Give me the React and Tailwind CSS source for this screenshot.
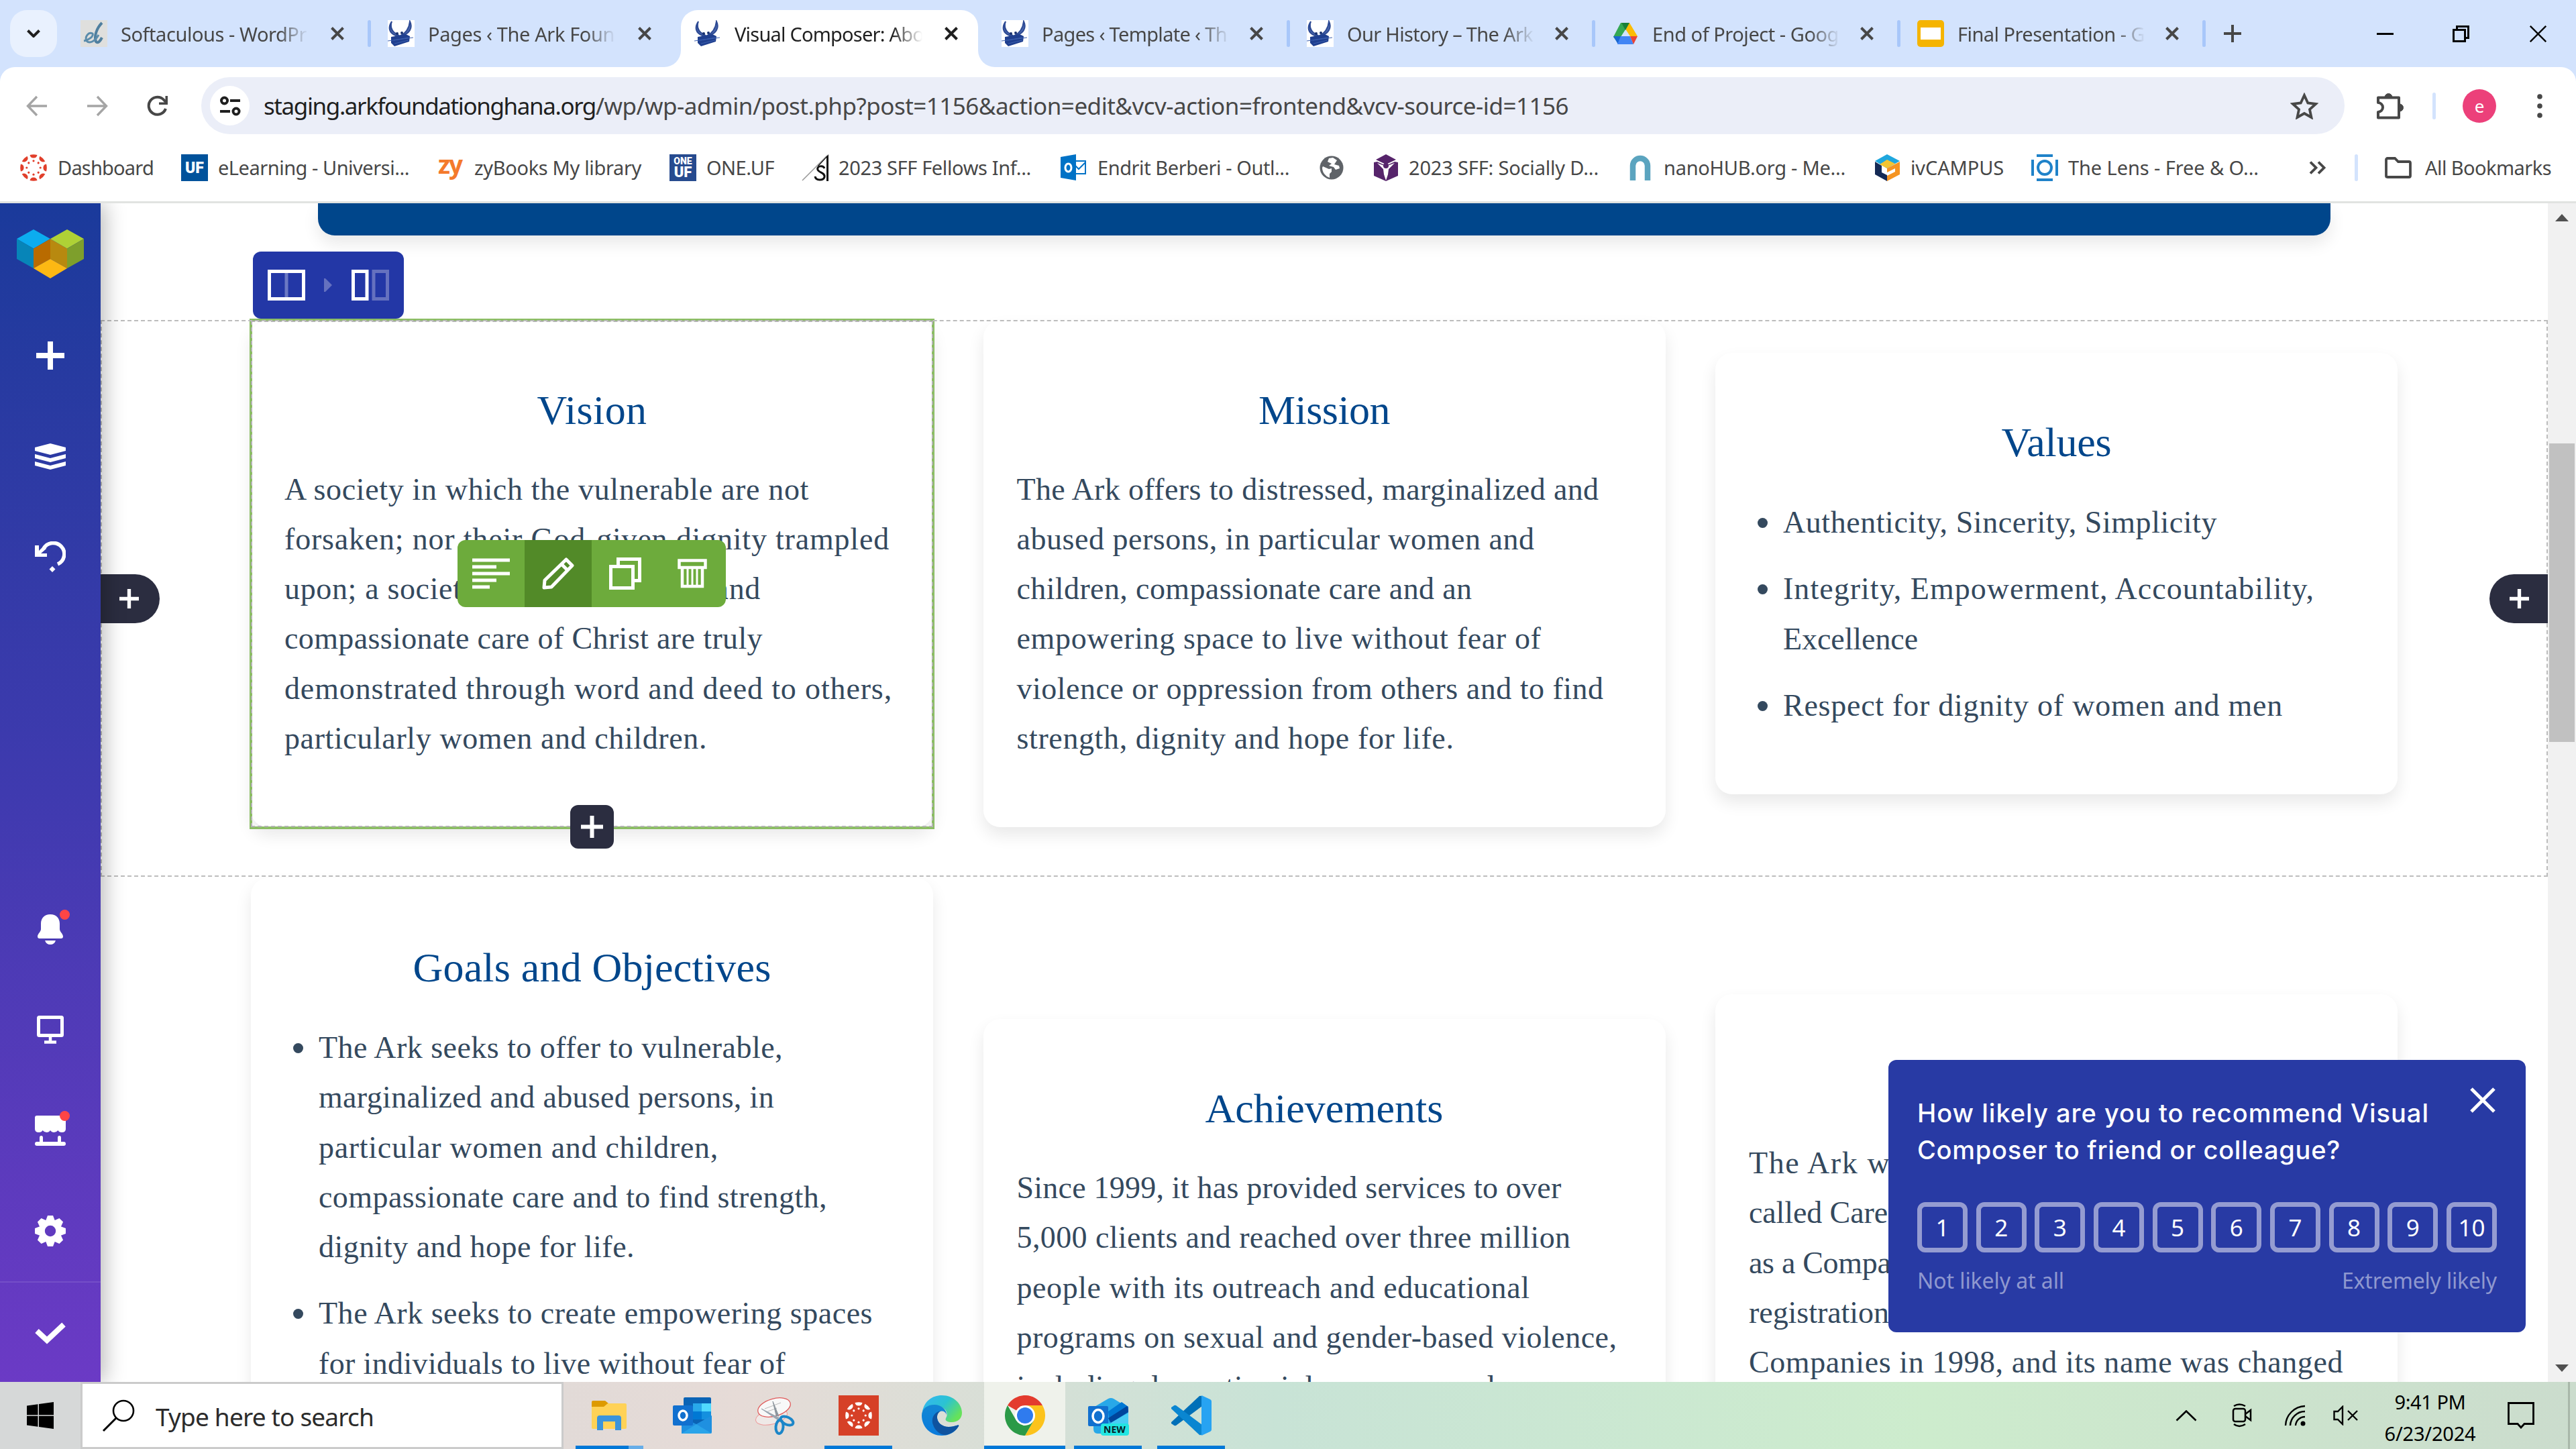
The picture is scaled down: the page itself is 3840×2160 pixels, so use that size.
import React, { useLayoutEffect, useRef, useState } from "react";

/* One line of text tracked so that it fills the given width. */
function Fit({ w, className = "", children }) {
  const ref = useRef(null);
  const [ls, setLs] = useState(0);
  useLayoutEffect(() => {
    const n = String(ref.current.textContent).length;
    const natural = ref.current.getBoundingClientRect().width;
    setLs((w - natural) / n);
  }, [w]);
  return (
    <span ref={ref} className={"inline-block whitespace-pre " + className} style={{ letterSpacing: ls + "px" }}>
      {children}
    </span>
  );
}

/* ---------- favicons ---------- */
const Ark = () => (
  <svg viewBox="0 0 40 40" className="size-10 bg-white">
    <path d="M6 2C-1 12 4 20 14 23L19 25C9 19 4 12 6 2Z" fill="#2d4a94" />
    <path d="M6 2C3 10 5 17 14 21L18 24L12 23C2 19 0 11 6 2Z" fill="#4c68ad" stroke="#2d4a94" strokeWidth="2" />
    <path d="M33 2C38 12 31 20 24 22L18 24C28 19 32 12 33 2Z" fill="#4c68ad" stroke="#2d4a94" strokeWidth="2" />
    <path d="M5 25L27 21L33 24L32 32L10 39L5 34Z" fill="#1f3f8f" />
    <path d="M0 31L38 26M9 30L31 26M10 35L31 30" stroke="#3c5fae" strokeWidth="1" />
    <circle cx="14" cy="20" r="2" fill="#16306f" />
    <circle cx="21" cy="19" r="2" fill="#16306f" />
  </svg>
);
const Soft = () => (
  <svg viewBox="0 0 40 40" className="size-10 bg-[#dfdfdd]">
    <path d="M32 4C24 12 20 24 23 32C26 36 30 30 32 26" fill="none" stroke="#4f7f9f" strokeWidth="4" />
    <path d="M5 31C12 30 20 24 18 20C12 17 6 25 9 31C14 36 22 31 27 22" fill="none" stroke="#5b8cab" strokeWidth="3" />
  </svg>
);
const Drive = () => (
  <svg viewBox="0 0 40 40" className="size-10">
    <path d="M13 4H26L20 14L8 33L2 25Z" fill="#34a853" />
    <path d="M14 4H26L38 24H27Z" fill="#fbbc04" />
    <path d="M14 4H26L20 15Z" fill="#188038" />
    <path d="M2 24H14L9 36Z" fill="#1967d2" />
    <path d="M13 24H27L32 36H8Z" fill="#4285f4" />
    <path d="M27 24H38L32 36Z" fill="#ea4335" />
  </svg>
);
const Slides = () => (
  <svg viewBox="0 0 40 40" className="size-10">
    <rect width="40" height="40" rx="5" fill="#f5b400" />
    <rect x="5" y="11" width="30" height="18" fill="#fff" />
  </svg>
);

const TABS = [
  { icon: Soft, text: "Softaculous - WordPr", w: 277, tab: 458, sep: true },
  { icon: Ark, text: "Pages ‹ The Ark Foun", w: 278, tab: 457 },
  { icon: Ark, text: "Visual Composer: Abo", w: 282, tab: 458, active: true },
  { icon: Ark, text: "Pages ‹ Template ‹ Th", w: 276, tab: 455, tight: true, sep: true },
  { icon: Ark, text: "Our History – The Ark", w: 277, tab: 455, tight: true, sep: true },
  { icon: Drive, text: "End of Project - Goog", w: 278, tab: 455, tight: true, sep: true },
  { icon: Slides, text: "Final Presentation - G", w: 279, tab: 456, tight: true, sep: true },
];

function TabStrip() {
  return (
    <div className="flex h-[100px] items-center bg-[#d3e3fd]">
      <div className="ml-[15px] mr-[15px] grid h-[70px] w-[70px] place-items-center rounded-[25px] bg-[#e9f1fe]">
        <svg viewBox="0 0 20 12" className="h-3 w-5">
          <path d="M1.5 1.5L10 10L18.5 1.5" fill="none" stroke="#1f1f1f" strokeWidth="4" />
        </svg>
      </div>
      {TABS.map((t, i) => (
        <div key={i} className="relative flex h-[100px] shrink-0 items-center pl-5" style={{ width: t.tab }}>
          {t.active && (
            <>
              <div className="absolute bottom-0 left-0 h-[85px] w-[443px] rounded-t-[25px] bg-white" />
              <svg viewBox="0 0 25 25" className="absolute -left-[25px] bottom-0 size-[25px]">
                <path d="M25 0V25H0A25 25 0 0 0 25 0Z" fill="#fff" />
              </svg>
              <svg viewBox="0 0 25 25" className="absolute bottom-0 left-[443px] size-[25px]">
                <path d="M0 0V25H25A25 25 0 0 1 0 0Z" fill="#fff" />
              </svg>
            </>
          )}
          <div className="relative flex items-center">
            <t.icon />
            <div
              className={
                "ml-[20px] h-[46px] w-[280px] overflow-hidden pt-0.5 text-[29px] leading-[44px] [mask-image:linear-gradient(to_right,#000_84%,transparent)] " +
                (t.active ? "text-[#1f1f1f]" : "text-[#474747]")
              }
            >
              <Fit w={t.w}>{t.text}</Fit>
            </div>
            <svg viewBox="0 0 20 20" className={"size-5 " + (t.tight ? "ml-[30px]" : "ml-[33px]")}>
              <path d="M1.5 1.5L18.5 18.5M18.5 1.5L1.5 18.5" stroke={t.active ? "#1f1f1f" : "#474747"} strokeWidth="4" />
            </svg>
            {t.sep && <div className="ml-[35px] h-10 w-[5px] rounded-full bg-[#a8c7fa]" />}
          </div>
        </div>
      ))}
      <svg viewBox="0 0 26 26" className="ml-[21px] size-[26px]">
        <path d="M13 0V26M0 13H26" stroke="#474747" strokeWidth="4" />
      </svg>
      <div className="ml-auto flex items-center gap-[100px] pr-11">
        <svg viewBox="0 0 25 25" className="-mr-[12px] h-[25px] w-[25px]">
          <path d="M0 12.5H25" stroke="#000" strokeWidth="3" />
        </svg>
        <svg viewBox="0 0 25 25" className="-mr-[10px] h-[25px] w-[25px]">
          <path d="M1.5 6.5H18.5V23.5H1.5ZM6.5 6V1.5H23.5V18.5H19" fill="none" stroke="#000" strokeWidth="3" />
        </svg>
        <svg viewBox="0 0 25 25" className="h-[25px] w-[25px]">
          <path d="M.8.8L24.2 24.2M24.2.8L.8 24.2" stroke="#000" strokeWidth="2.4" />
        </svg>
      </div>
    </div>
  );
}

function AddressBar() {
  return (
    <div className="flex h-[115px] items-center rounded-t-[22px] bg-white pl-[39px]">
      <svg viewBox="0 0 32 32" className="size-8">
        <path d="M31 16H3M16 2L2.5 16L16 30" fill="none" stroke="#a5a5a5" strokeWidth="3.4" />
      </svg>
      <svg viewBox="0 0 32 32" className="ml-[58px] size-8">
        <path d="M1 16H29M16 2L29.5 16L16 30" fill="none" stroke="#a5a5a5" strokeWidth="3.4" />
      </svg>
      <svg viewBox="0 0 32 32" className="ml-[58px] size-8">
        <path d="M28 20A13 13 0 1 1 25.5 7.2L29 11" fill="none" stroke="#474747" strokeWidth="4" />
        <path d="M31 1V14H18V10.5H27.5V1Z" fill="#474747" />
      </svg>
      <div className="ml-[49px] flex h-[85px] w-[3195px] items-center rounded-full bg-[#ebeef8] pl-[13px]">
        <div className="grid size-[59px] place-items-center rounded-full bg-white">
          <svg viewBox="0 0 32 30" className="h-[30px] w-8">
            <g fill="none" stroke="#1f1f1f" strokeWidth="4">
              <circle cx="7.500" cy="7" r="4.500" />
              <path d="M16 7H31M1 23H16" />
              <circle cx="25" cy="23" r="4.500" />
            </g>
          </svg>
        </div>
        <div className="ml-[21px] flex text-[35px] leading-[50px]">
          <Fit w={495} className="text-[#1f1f1f]">staging.arkfoundationghana.org</Fit>
          <Fit w={1450} className="text-[#474747]">/wp/wp-admin/post.php?post=1156&amp;action=edit&amp;vcv-action=frontend&amp;vcv-source-id=1156</Fit>
        </div>
        <svg viewBox="0 0 42 40" className="ml-auto mr-[39px] h-10 w-[42px]">
          <path d="M21 4L26.300 15.500L38 17L29 25.200L31.500 37L21 31L10.500 37L13 25.200L4 17L15.700 15.500Z" fill="none" stroke="#474747" strokeWidth="3.800" />
        </svg>
      </div>
      <svg viewBox="0 0 42 42" className="ml-[47px] size-[42px]">
        <path d="M3 8.500H34V38.500H3V30A7 7 0 0 0 3 16Z" fill="none" stroke="#474747" strokeWidth="4" strokeLinejoin="round" />
        <path d="M13 8A5.500 5.500 0 0 1 24 8ZM35 18A5.500 5.500 0 0 1 35 29Z" fill="#474747" stroke="#474747" />
      </svg>
      <div className="ml-[42px] h-10 w-[5px] rounded-full bg-[#d3e3fd]" />
      <div className="ml-10 grid size-[50px] place-items-center rounded-full bg-[#ec407a] text-[26px] leading-none text-white">e</div>
      <svg viewBox="0 0 8 36" className="ml-[61px] h-9 w-2">
        <g fill="#474747">
          <circle cx="4" cy="4" r="3.800" />
          <circle cx="4" cy="18" r="3.800" />
          <circle cx="4" cy="32" r="3.800" />
        </g>
      </svg>
    </div>
  );
}

/* ---------- bookmarks ---------- */
const RingMark = ({ color, className }) => (
  <svg viewBox="0 0 40 40" className={className}>
    {[0, 45, 90, 135, 180, 225, 270, 315].map((a) => (
      <g key={a} transform={"rotate(" + a + " 20 20)"} fill={color}>
        <path d="M14.500 1A20 20 0 0 1 25.500 1A5.600 5.600 0 0 1 14.500 1Z" />
        <circle cx="20" cy="9.800" r="1.600" />
      </g>
    ))}
  </svg>
);
const BM = [
  { x: 30, iw: 40, gap: 16, w: 143, text: "Dashboard", icon: <RingMark color="#e13f2b" className="size-10" /> },
  {
    x: 270, iw: 40, gap: 15, w: 285, text: "eLearning - Universi...",
    icon: <div className="grid size-10 place-items-center bg-[#00529b] font-['Roboto'] text-[23px] font-black leading-none text-white">UF</div>,
  },
  {
    x: 653, iw: 40, gap: 14, w: 249, text: "zyBooks My library",
    icon: <div className="size-10 font-['Open_Sans'] text-[37px] font-bold leading-[29px] tracking-[-2px] text-[#f47a2c]">zy</div>,
  },
  {
    x: 998, iw: 40, gap: 15, w: 101, text: "ONE.UF",
    icon: (
      <div className="flex size-10 flex-col items-center justify-center bg-[#274b8f] font-['Roboto'] font-black text-white">
        <span className="text-[14px] leading-[13px]">ONE</span>
        <span className="text-[22px] leading-[20px]">UF</span>
      </div>
    ),
  },
  {
    x: 1195, iw: 41, gap: 14, w: 287, text: "2023 SFF Fellows Inf...",
    icon: (
      <svg viewBox="0 0 41 40" className="h-10 w-[41px]">
        <path d="M1 39L38 2" stroke="#999" strokeWidth="1.500" />
        <path d="M24 17L40 0V40H37V5L25 18Z" fill="#111" />
        <path d="M34 21C32 16 22 17 24 23C26 28 35 27 34 34C32 40 21 39 20 33" fill="none" stroke="#111" strokeWidth="3" />
      </svg>
    ),
  },
  {
    x: 1581, iw: 39, gap: 16, w: 286, text: "Endrit Berberi - Outl...",
    icon: (
      <svg viewBox="0 0 39 40" className="h-10 w-[39px]">
        <path d="M22 10H37V29H22" fill="#fff" stroke="#0072c6" strokeWidth="2" />
        <path d="M22 17L27 22L37 12" fill="none" stroke="#0072c6" strokeWidth="2" />
        <path d="M0 4L23 0V39L0 35Z" fill="#0072c6" />
        <ellipse cx="11.500" cy="20" rx="4.500" ry="6" fill="none" stroke="#fff" strokeWidth="3" />
      </svg>
    ),
  },
  {
    x: 1967, iw: 36, gap: 0, w: 0, text: "",
    icon: (
      <svg viewBox="0 0 36 36" className="size-9">
        <circle cx="18" cy="18" r="17.500" fill="#5f6368" />
        <path d="M5 16L14 20L18 19V24L15 27V33A16 16 0 0 1 4 18ZM14 4L12 9L18 12L14 15L21 17L24 21L30 19L29 15L22 13L26 7L20 3Z" fill="#fff" />
      </svg>
    ),
  },
  {
    x: 2048, iw: 36, gap: 16, w: 283, text: "2023 SFF: Socially D...",
    icon: (
      <svg viewBox="0 0 36 40" className="h-10 w-9">
        <path d="M18 0L33 8L18 15L3 8Z" fill="#56246b" />
        <path d="M0 12L5 11L18 17L31 11L36 12V32L18 40L0 32Z" fill="#56246b" />
        <path d="M5 13L14 22L15 30L18 39L21 30L22 22L31 13L18 18Z" fill="#fff" />
        <circle cx="18" cy="17" r="4" fill="#56246b" />
      </svg>
    ),
  },
  {
    x: 2429, iw: 32, gap: 19, w: 271, text: "nanoHUB.org - Me...",
    icon: (
      <svg viewBox="0 0 32 38" className="h-[38px] w-8">
        <path d="M5 38V16A11 11 0 0 1 27 16V38" fill="none" stroke="#5ba4bf" strokeWidth="8.500" />
      </svg>
    ),
  },
  {
    x: 2795, iw: 37, gap: 16, w: 139, text: "ivCAMPUS",
    icon: (
      <svg viewBox="0 0 37 40" className="h-10 w-[37px]">
        <path d="M18 0L37 10L18 21L0 10Z" fill="#1fa7de" />
        <path d="M18 8L30 14L18 21L7 15Z" fill="#f3c531" />
        <path d="M0 11L10 17V27L18 31V40L0 30Z" fill="#152a55" />
        <path d="M18 21L37 11V30L18 40V32L30 26V21L18 27Z" fill="#f59422" />
      </svg>
    ),
  },
  {
    x: 3028, iw: 40, gap: 15, w: 284, text: "The Lens - Free & O...",
    icon: (
      <svg viewBox="0 0 40 40" className="size-10">
        <g fill="none" stroke="#1f82c9" strokeWidth="4">
          <circle cx="20" cy="20" r="10" />
          <path d="M8 2H32M8 38H32M2 8V32M38 8V32" />
        </g>
      </svg>
    ),
  },
];

function Bookmarks() {
  return (
    <div className="flex h-[88px] items-center border-b-[3px] border-[#e1e3e1] bg-white pb-[15px] text-[29px] leading-10 text-[#474747]">
      {BM.map((b, i) => {
        const next = BM[i + 1] ? BM[i + 1].x : 3442;
        return (
          <div key={i} className="flex shrink-0 items-center" style={{ width: next - b.x + (i === 0 ? b.x : 0), paddingLeft: i === 0 ? b.x : 0 }}>
            <div className="shrink-0" style={{ width: b.iw }}>{b.icon}</div>
            {b.text && (
              <div style={{ marginLeft: b.gap }}>
                <Fit w={b.w}>{b.text}</Fit>
              </div>
            )}
          </div>
        );
      })}
      <svg viewBox="0 0 26 20" className="h-5 w-[26px]">
        <path d="M2 1.500L10.500 10L2 18.500M14 1.500L22.500 10L14 18.500" fill="none" stroke="#474747" strokeWidth="3.800" />
      </svg>
      <div className="ml-[42px] h-10 w-[5px] rounded-full bg-[#d3e3fd]" />
      <svg viewBox="0 0 40 32" className="ml-10 h-8 w-10">
        <path d="M2 4A2 2 0 0 1 4 2H15L20 7H36A2 2 0 0 1 38 9V28A2 2 0 0 1 36 30H4A2 2 0 0 1 2 28Z" fill="none" stroke="#474747" strokeWidth="3.800" />
      </svg>
      <div className="ml-5">
        <Fit w={188}>All Bookmarks</Fit>
      </div>
    </div>
  );
}

/* ---------- editor sidebar ---------- */
const Slot = ({ children, dot }) => (
  <div className="grid h-[150px] w-[150px] place-items-center">
    <div className="relative grid size-[46px] place-items-center">
      {children}
      {dot && <div className="absolute -right-[6px] -top-[6px] size-[15px] rounded-full bg-[#ff4545]" />}
    </div>
  </div>
);

function Sidebar() {
  return (
    <aside className="relative z-10 flex h-full w-[150px] shrink-0 flex-col bg-linear-to-b from-[#1a3a9b] via-[#3f3aaf] to-[#6b3ac5] shadow-[6px_0_30px_rgba(0,0,0,0.28)]">
      <div className="grid h-[152px] place-items-center pb-[2px]">
        <svg viewBox="25 342 100 73" className="h-[73px] w-[100px]">
          <path d="M50 342L75 356L50 370.500L25 356Z" fill="#0cacef" />
          <path d="M25 356L50 370.500V400L25 386Z" fill="#0785b8" />
          <path d="M50 370.500L75 356V386L50 400Z" fill="#b96b00" />
          <path d="M75 356L100 370.500V400L75 386Z" fill="#b8890f" />
          <path d="M50 400L75 386L100 400L75 415Z" fill="#fdb813" />
          <path d="M100 342L125 356L100 370.500L75 356Z" fill="#afd136" />
          <path d="M100 370.500L125 356V386L100 400Z" fill="#7e9f2c" />
        </svg>
      </div>
      <Slot>
        <svg viewBox="0 0 42 42" className="size-[42px]">
          <path d="M21 0V42M0 21H42" stroke="#fff" strokeWidth="8" />
        </svg>
      </Slot>
      <Slot>
        <svg viewBox="0 0 46 39" className="h-[39px] w-[46px]" fill="#fff">
          <path d="M0 6L23 0L46 6V11L23 17L0 11Z" />
          <path d="M0 16L23 22L46 16V22L23 28L0 22Z" />
          <path d="M0 27L23 33L46 27V33L23 39L0 33Z" />
        </svg>
      </Slot>
      <Slot>
        <svg viewBox="0 0 46 46" className="size-[46px]">
          <path d="M13 10.700A16.500 16.500 0 1 1 34 34" fill="none" stroke="#fff" strokeWidth="5.500" />
          <path d="M0 6H6V14L13 7L17 11L9 18H18V23H0Z" fill="#fff" />
          <path d="M26 37L30.500 41.500L26 46L21.500 41.500Z" fill="#fff" />
        </svg>
      </Slot>
      <div className="flex-1" />
      <Slot dot>
        <svg viewBox="0 0 40 45" className="h-[45px] w-10" fill="#fff">
          <path d="M20 0C29 0 34 6 34 14V22C34 26 39 29 39 33Q39 36 36 36H4Q1 36 1 33C1 29 6 26 6 22V14C6 6 11 0 20 0ZM12 39H28Q26 45 20 45Q14 45 12 39Z" />
        </svg>
      </Slot>
      <Slot>
        <svg viewBox="0 0 40 42" className="h-[42px] w-10">
          <rect x="2.500" y="2.500" width="35" height="27" rx="1" fill="none" stroke="#fff" strokeWidth="5" />
          <path d="M20 31V40M11 39.500H29" stroke="#fff" strokeWidth="4.500" />
        </svg>
      </Slot>
      <Slot dot>
        <svg viewBox="0 0 46 45" className="h-[45px] w-[46px]" fill="#fff">
          <path d="M3 0H43Q46 0 46 3V20Q46 25 40 25Q36 25 34.500 22Q32 25 28.500 25Q25 25 23 22Q21 25 17.500 25Q14 25 11.500 22Q10 25 6 25Q0 25 0 20V3Q0 0 3 0Z" />
          <path d="M7 39V33Q7 30 9.500 30Q12 30 12 33V39H34V33Q34 30 36.500 30Q39 30 39 33V39H43Q46 39 46 42Q46 45 43 45H3Q0 45 0 42Q0 39 3 39Z" />
        </svg>
      </Slot>
      <Slot>
        <svg viewBox="0 0 46 46" className="size-[46px]">
          {[0, 45, 90, 135].map((a) => (
            <path key={a} d="M19 0H27L30 8H16ZM19 46H27L30 38H16Z" fill="#fff" transform={"rotate(" + a + " 23 23)"} />
          ))}
          <circle cx="23" cy="23" r="12.700" fill="none" stroke="#fff" strokeWidth="9" />
        </svg>
      </Slot>
      <div className="grid h-[150px] place-items-center border-t-2 border-white/10 pt-[4px]">
        <svg viewBox="0 0 46 34" className="h-[34px] w-[46px]">
          <path d="M3 13L18 27L43 3.500" fill="none" stroke="#fff" strokeWidth="8" />
        </svg>
      </div>
    </aside>
  );
}

/* ---------- page canvas ---------- */
const Heading = ({ w, children }) => (
  <div className="h-[74px] text-center text-[62px] leading-[74px] text-[#00468b]">
    <Fit w={w}>{children}</Fit>
  </div>
);
const Lines = ({ items }) => (
  <div className="mt-[45px] text-[46px] leading-[74.250px] text-[#34495e]">
    {items.map(([t, w]) => (
      <div key={t} className="h-[74.250px]">
        <Fit w={w + 1}>{t}</Fit>
      </div>
    ))}
  </div>
);
const List = ({ items }) => (
  <div className="mt-[46px] flex flex-col gap-[25px] text-[46px] leading-[74.250px] text-[#34495e]">
    {items.map((li) => (
      <div key={li[0][0]} className="flex pl-[13px]">
        <div className="mt-[30px] size-[15px] shrink-0 rounded-full bg-[#34495e]" />
        <div className="ml-[23px]">
          {li.map(([t, w]) => (
            <div key={t} className="h-[74.250px]">
              <Fit w={w + 1}>{t}</Fit>
            </div>
          ))}
        </div>
      </div>
    ))}
  </div>
);
const Card = ({ className, children }) => (
  <div className={"relative w-[1017px] shrink-0 rounded-[25px] bg-white px-[50px] pt-[96px] shadow-[0_12px_25px_rgba(0,0,0,0.09)] " + className}>{children}</div>
);
const Plus = ({ className }) => (
  <svg viewBox="0 0 30 30" className={className}>
    <path d="M15 0V30M0 15H30" stroke="#fff" strokeWidth="5.500" />
  </svg>
);

function ElementControls() {
  return (
    <div className="absolute left-[308px] top-[327px] flex h-[100px] w-[400px] overflow-hidden rounded-[12px] bg-[#6dab3c]">
      <div className="grid flex-1 place-items-center">
        <svg viewBox="0 0 56 46" className="h-[46px] w-14">
          <path d="M0 3H56M0 13H36M0 23H56M0 33H36M0 43H26" stroke="#fff" strokeWidth="5" />
        </svg>
      </div>
      <div className="grid flex-1 place-items-center bg-[#528a28]">
        <svg viewBox="0 0 48 48" className="size-12">
          <g fill="none" stroke="#fff" strokeWidth="5" strokeLinejoin="round">
            <path d="M36 3L45 12L14 44L3 45L4 34Z" />
            <path d="M29 10L38 19" />
          </g>
        </svg>
      </div>
      <div className="grid flex-1 place-items-center">
        <svg viewBox="0 0 48 48" className="size-12">
          <path d="M2.500 13.500H35.500V45.500H2.500ZM13.500 12V2.500H45.500V34.500H37" fill="none" stroke="#fff" strokeWidth="5" />
        </svg>
      </div>
      <div className="grid flex-1 place-items-center">
        <svg viewBox="0 0 44 44" className="size-11">
          <g fill="none" stroke="#fff" strokeWidth="4.500">
            <path d="M2.500 2.500H41.500V13H2.500ZM7 14V41H37V14" />
            <path d="M15 14V41M22 14V41M29 14V41" strokeWidth="3" />
          </g>
        </svg>
      </div>
    </div>
  );
}

function Breadcrumb() {
  return (
    <div className="absolute left-[227px] top-[72px] flex h-[100px] w-[225px] items-center rounded-[12px] bg-[#2337a6] pl-[22px]">
      <svg viewBox="0 0 56 46" className="h-[46px] w-14">
        <path d="M28 4V42" stroke="#6b78c3" strokeWidth="5" />
        <path d="M2.500 2.500H53.500V43.500H2.500Z" fill="none" stroke="#fff" strokeWidth="5" />
      </svg>
      <svg viewBox="0 0 12 20" className="ml-7 h-5 w-3">
        <path d="M0 0H2L12 10L2 20H0Z" fill="#6571bf" />
      </svg>
      <svg viewBox="0 0 56 46" className="ml-[29px] h-[46px] w-14">
        <path d="M2.500 2.500H23V43.500H2.500Z" fill="none" stroke="#fff" strokeWidth="5" />
        <path d="M33 2.500H53.500V43.500H33Z" fill="none" stroke="#6571bf" strokeWidth="5" />
      </svg>
    </div>
  );
}

function Canvas() {
  return (
    <main className="relative h-full w-[3648px] shrink-0 overflow-hidden bg-white font-['Liberation_Serif',serif]">
      <div className="ml-[324px] h-12 w-[3000px] rounded-b-[25px] bg-[#00468b] shadow-[0_12px_25px_rgba(0,0,0,0.09)]" />
      <div className="relative mt-[126px] flex h-[830px] gap-[74.500px] pl-[224px] pb-[75px]">
        <div className="flex h-[755px] items-center gap-[74.500px] pt-px">
          <Card className="h-[755px]">
            <Heading w={164}>Vision</Heading>
            <Lines
              items={[
                ["A society in which the vulnerable are not", 781],
                ["forsaken; nor their God-given dignity trampled", 901],
                ["upon; a society in which the love and", 709],
                ["compassionate care of Christ are truly", 712],
                ["demonstrated through word and deed to others,", 905],
                ["particularly women and children.", 629],
              ]}
            />
            <div className="absolute -inset-x-[2px] -bottom-[3px] -top-[3px] border-4 border-[#8bbd63]" />
            <div className="absolute inset-0 border-2 border-dashed border-[#b3b3b3]" />
            <ElementControls />
            <div className="absolute -bottom-[32px] left-[476px] grid size-[65px] place-items-center rounded-[12px] bg-[#2b2d40]">
              <Plus className="size-[33px]" />
            </div>
          </Card>
          <Card className="h-[755px]">
            <Heading w={196}>Mission</Heading>
            <Lines
              items={[
                ["The Ark offers to distressed, marginalized and", 867],
                ["abused persons, in particular women and", 771],
                ["children, compassionate care and an", 678],
                ["empowering space to live without fear of", 781],
                ["violence or oppression from others and to find", 874],
                ["strength, dignity and hope for life.", 651],
              ]}
            />
          </Card>
          <Card className="h-[658px]">
            <Heading w={164}>Values</Heading>
            <List
              items={[
                [["Authenticity, Sincerity, Simplicity", 646]],
                [
                  ["Integrity, Empowerment, Accountability,", 791],
                  ["Excellence", 200],
                ],
                [["Respect for dignity of women and men", 744]],
              ]}
            />
          </Card>
        </div>
        <div className="absolute inset-0 border-2 border-dashed border-[#bdbdbd]" />
        <div className="absolute left-0 top-[379px] flex h-[73px] w-[88px] items-center rounded-r-full bg-[#2b2d40] pl-[28px]">
          <Plus className="size-[29px]" />
        </div>
        <div className="absolute right-0 top-[379px] flex h-[73px] w-[87px] items-center rounded-l-full bg-[#2b2d40] pl-[30px]">
          <Plus className="size-[29px]" />
        </div>
      </div>
      <div className="flex items-start gap-[74.500px] pl-[224px] pt-0.5">
        <Card className="h-[1000px]">
          <Heading w={534}>Goals and Objectives</Heading>
          <List
            items={[
              [
                ["The Ark seeks to offer to vulnerable,", 691],
                ["marginalized and abused persons, in", 678],
                ["particular women and children,", 595],
                ["compassionate care and to find strength,", 757],
                ["dignity and hope for life.", 470],
              ],
              [
                ["The Ark seeks to create empowering spaces", 825],
                ["for individuals to live without fear of", 695],
              ],
            ]}
          />
        </Card>
        <Card className="mt-[210px] h-[800px]">
          <Heading w={355}>Achievements</Heading>
          <Lines
            items={[
              ["Since 1999, it has provided services to over", 811],
              ["5,000 clients and reached over three million", 825],
              ["people with its outreach and educational", 764],
              ["programs on sexual and gender-based violence,", 894],
              ["including domestic violence, rape and", 712],
            ]}
          />
        </Card>
        <Card className="mt-[173px] h-[800px]">
          <div className="h-[74px]" />
          <Lines
            items={[
              ["The Ark was", 252],
              ["called Care", 206],
              ["as a Company", 256],
              ["registration", 208],
              ["Companies in 1998, and its name was changed", 885],
            ]}
          />
        </Card>
      </div>
      <Breadcrumb />
      <Survey />
    </main>
  );
}

function Survey() {
  return (
    <div className="absolute left-[2665px] top-[1277px] flex h-[406px] w-[950px] flex-col rounded-[12px] bg-[#283aa4] pl-[43px] pr-[43px] pt-[41px] font-['Inter',sans-serif] text-white">
      <div className="flex h-[114px] justify-between">
        <div className="pt-[11px] text-[38px] font-medium leading-[55px]">
          <div><Fit w={763}>How likely are you to recommend Visual</Fit></div>
          <div><Fit w={631}>Composer to friend or colleague?</Fit></div>
        </div>
        <svg viewBox="0 0 38 38" className="mr-[2px] size-[38px]">
          <path d="M2 2L36 36M36 2L2 36" stroke="#fff" strokeWidth="5" />
        </svg>
      </div>
      <div className="mt-[57px] flex justify-between">
        {[1, 2, 3, 4, 5, 6, 7, 8, 9, 10].map((n) => (
          <div key={n} className="grid h-[75px] w-[75px] place-items-center rounded-[12px] border-[7px] border-[#959cd1] font-['Noto_Sans',sans-serif] text-[35px] leading-none">
            {n}
          </div>
        ))}
      </div>
      <div className="mt-[19px] flex justify-between font-['Noto_Sans',sans-serif] text-[32px] leading-[46px] text-[#8f98cf]">
        <Fit w={219}>Not likely at all</Fit>
        <Fit w={231}>Extremely likely</Fit>
      </div>
    </div>
  );
}

function Scrollbar() {
  return (
    <div className="flex h-full w-[42px] flex-col items-center bg-[#f1f1f1]">
      <svg viewBox="0 0 20 11" className="mt-[16px] h-[11px] w-5"><path d="M10 0L20 11H0Z" fill="#505050" /></svg>
      <div className="mt-[331px] h-[445px] w-[38px] bg-[#c1c1c1]" />
      <svg viewBox="0 0 20 11" className="mb-[15px] mt-auto h-[11px] w-5"><path d="M10 11L20 0H0Z" fill="#505050" /></svg>
    </div>
  );
}

/* ---------- taskbar ---------- */
const Outlook = ({ className }) => (
  <svg viewBox="0 0 60 60" className={className}>
    <rect x="17" y="3" width="41" height="40" rx="2" fill="#0a63b5" />
    <path d="M31 12H44V24H31Z" fill="#28a8ea" />
    <path d="M44 12H58V24H44Z" fill="#50d9ff" />
    <path d="M31 24H44V36H31Z" fill="#0078d4" />
    <path d="M44 24H58V36H44Z" fill="#1490df" />
    <path d="M14 57V32L36 43L59 30V55Q59 57 57 57Z" fill="#1f90e0" />
    <path d="M14 57L36 43L59 57Z" fill="#35b8f1" opacity=".5" />
    <rect x="1" y="15" width="30" height="30" rx="2" fill="#1170cf" />
    <ellipse cx="16" cy="30" rx="6" ry="7" fill="none" stroke="#fff" strokeWidth="3.500" />
  </svg>
);

const APPS = [
  {
    bar: 81,
    icon: (
      <svg viewBox="0 0 60 60" className="size-[60px]">
        <path d="M4 10Q4 8 6 8H24L29 12V22H4Z" fill="#dd9a00" />
        <path d="M4 17H22L28 12H54Q56 12 56 14V48Q56 50 54 50H6Q4 50 4 48Z" fill="#ffd257" />
        <path d="M12 52V34Q12 30 16 30H44Q48 30 48 34V52H39V39H21V52Z" fill="#3b94dc" />
      </svg>
    ),
  },
  { icon: <Outlook className="size-[60px]" /> },
  {
    icon: (
      <svg viewBox="0 0 60 60" className="size-[60px]">
        <ellipse cx="24" cy="32" rx="24" ry="11" transform="rotate(-14 24 32)" fill="#efe9e7" stroke="#e99" />
        <ellipse cx="28" cy="18" rx="25" ry="13" transform="rotate(-16 28 18)" fill="#f8f8f8" stroke="#e05b5b" strokeWidth="1.300" />
        <path d="M14 20L38 11M16 25L32 19" stroke="#bbb" />
        <path d="M9 20L38 35L34 37Z" fill="#9aa5b0" stroke="#9aa5b0" />
        <path d="M26 9L35 31L31 30Z" fill="#8c959d" stroke="#8c959d" />
        <ellipse cx="36" cy="47" rx="5.500" ry="10" transform="rotate(5 36 47)" fill="none" stroke="#1c86c8" strokeWidth="4" />
        <ellipse cx="47" cy="38" rx="10" ry="5.500" transform="rotate(25 47 38)" fill="none" stroke="#1c86c8" strokeWidth="4" />
      </svg>
    ),
  },
  {
    bar: 101,
    icon: (
      <div className="grid size-[60px] place-items-center bg-[#d64027]">
        <RingMark color="#fff" className="size-10" />
      </div>
    ),
  },
  {
    icon: (
      <svg viewBox="0 0 60 60" className="size-[60px]">
        <defs>
          <linearGradient id="eg" x1="0" y1="0" x2="1" y2=".6"><stop offset="0" stopColor="#35b5f5" /><stop offset=".55" stopColor="#2bc3d2" /><stop offset="1" stopColor="#66e25a" /></linearGradient>
          <linearGradient id="eb" x1="0" y1="0" x2="0" y2="1"><stop offset="0" stopColor="#1387d4" /><stop offset="1" stopColor="#0a7bdc" /></linearGradient>
        </defs>
        <path d="M1 24C4 9 15 0 30 0C48 0 60 13 60 26C60 35 53 40 45 40C39 40 34 38 36 34C40 28 37 20 28 17C18 14 7 17 1 24Z" fill="url(#eg)" />
        <path d="M0 30C0 20 8 14 19 14C29 14 37 21 37 29C34 21 24 22 23 31C22 40 30 47 40 47C48 47 53 44 55 44C56 46 48 60 30 60C13 60 0 47 0 30Z" fill="url(#eb)" />
        <path d="M29 23C17 25 14 36 17 44C20 54 30 60 36 59C47 57 54 49 55.500 45C55 43 49 47 40 47C30 47 22 40 23 31C23.500 27 26 24 29 23Z" fill="#0f539f" />
      </svg>
    ),
  },
  {
    bar: 121, open: true,
    icon: (
      <svg viewBox="0 0 60 60" className="size-[60px]">
        <path d="M30 30L4 15A30 30 0 0 1 56 15Z" fill="#e33b2e" />
        <path d="M30 15H56A30 30 0 0 1 30 60L43 37.500Z" fill="#fcc31c" />
        <path d="M4 15A30 30 0 0 0 30 60L43 37.500L17 37.500Z" fill="#2b9a47" />
        <circle cx="30" cy="30" r="15" fill="#fff" />
        <circle cx="30" cy="30" r="12" fill="#2f7bee" />
      </svg>
    ),
  },
  {
    bar: 101,
    icon: (
      <div className="relative size-[60px]">
        <svg viewBox="0 0 60 60" className="size-[60px]">
          <path d="M8 18L30 5Q34 3 38 5L56 16Q60 18 60 22V50L36 57H14Q8 57 8 50Z" fill="#28a8e8" />
          <path d="M30 24L50 10L60 17V24L32 40Z" fill="#0078d4" />
          <path d="M30 34L58 16Q60 18 60 25L34 41Z" fill="#00459c" />
          <path d="M34 41L60 26V50H34Z" fill="#49cdf5" />
          <rect x="0" y="16" width="30" height="30" rx="2" fill="#1170cf" />
          <ellipse cx="15" cy="31" rx="8" ry="9.500" fill="none" stroke="#fff" strokeWidth="3.500" />
        </svg>
        <div className="absolute -right-px bottom-0 h-[18px] w-[42px] rounded-[4px] bg-[#22e6e2] text-center text-[14px] font-bold leading-[18px] text-[#06222a]">NEW</div>
      </div>
    ),
  },
  {
    bar: 101,
    icon: (
      <svg viewBox="0 0 60 60" className="size-[60px]">
        <path d="M0 40L42 1Q46 0 46 4V16L7 45Q5 46 3 44L0 42Z" fill="#0070b8" />
        <path d="M0 20L42 59Q46 60 46 56V44L7 15Q5 14 3 16L0 18Z" fill="#0a86d1" />
        <path d="M45 0L58 6Q60 7 60 9V51Q60 53 58 54L45 60Z" fill="#27a3f2" />
      </svg>
    ),
  },
];

function Taskbar() {
  return (
    <footer className="flex h-[100px] items-center bg-[#cbdccd] text-black">
      <div className="flex h-full w-[1900px] shrink-0 items-center bg-linear-to-r from-[#d6d8d8] from-5% via-[#e6dbd7] via-58% to-[#c8e3d6]">
        <div className="grid h-full w-[120px] place-items-center bg-[#d6d8d8]">
          <svg viewBox="0 0 40 40" className="size-10">
            <path d="M0 5.500L16.500 3.200V19.200H0ZM18 3L40 0V19.200H18ZM0 20.700H16.500V36.800L0 34.500ZM18 20.700H40V40L18 37Z" />
          </svg>
        </div>
        <div className="flex h-full w-[720px] items-center border-[3px] border-[#cbcbcb] bg-white pl-[29px]">
          <svg viewBox="0 0 50 50" className="size-[50px]">
            <circle cx="32" cy="18" r="15" fill="none" stroke="#000" strokeWidth="2.600" />
            <path d="M21 29L2 48" stroke="#000" strokeWidth="3" />
          </svg>
          <div className="ml-[30px] pt-[3px] text-[37px] leading-[50px] text-[#2b2b2b]">
            <Fit w={325}>Type here to search</Fit>
          </div>
        </div>
        <div className="flex h-full pl-[7px]">
          {APPS.map((a, i) => (
            <div key={i} className={"relative grid h-full w-[121px] place-items-center " + (i ? "ml-[3px] " : "") + (a.open ? "bg-[#eff2eb]" : "")}>
              {a.icon}
              {a.bar && (
                <div className="absolute bottom-0 flex h-[5px] bg-[#0078d7]" style={{ width: a.bar, left: i === 0 ? 11 : (121 - a.bar) / 2 }}>
                  {i === 0 && <div className="ml-[79px] h-[5px] w-[22px] shrink-0 bg-[#66ade8]" />}
                </div>
              )}
            </div>
          ))}
        </div>
      </div>
      <div className="flex h-full flex-1 items-center bg-linear-to-r from-[#c8e3d6] via-[#cdeccd] via-50% to-[#cbdccd]">
        <div className="ml-auto flex items-center">
          <svg viewBox="0 0 32 17" className="h-[17px] w-8"><path d="M1.500 15.500L16 1.500L30.500 15.500" fill="none" stroke="#000" strokeWidth="2.600" /></svg>
          <svg viewBox="0 0 30 36" className="ml-[52px] h-9 w-[30px]">
            <g fill="none" stroke="#000" strokeWidth="2.500">
              <rect x="2" y="8" width="18" height="19" rx="3" />
              <path d="M20 16L28 10V25L20 19M3 4Q11-1 20 4M3 31Q11 37 20 31" />
            </g>
          </svg>
          <svg viewBox="0 0 32 32" className="ml-[48px] size-8">
            <g fill="none" stroke="#000" strokeWidth="2.400">
              <path d="M2 31A30 30 0 0 1 31 2" />
              <path d="M9 31A22 22 0 0 1 31 10" />
              <path d="M17 31A14 14 0 0 1 31 18" />
            </g>
            <circle cx="28" cy="28" r="3.500" />
          </svg>
          <svg viewBox="0 0 38 30" className="ml-[41px] h-[30px] w-[38px]">
            <path d="M1.500 9H7L14 2V28L7 21H1.500ZM22 8L36 22M36 8L22 22" fill="none" stroke="#000" strokeWidth="2.400" />
          </svg>
          <div className="ml-[38px] flex w-[137px] flex-col items-center pt-[5px] text-[29px] leading-[47px]">
            <Fit w={106}>9:41 PM</Fit>
            <Fit w={136}>6/23/2024</Fit>
          </div>
          <svg viewBox="0 0 40 40" className="ml-[47px] size-10"><path d="M1.500 1.500H38.500V32.500H25L20 38L15 32.500H1.500Z" fill="none" stroke="#000" strokeWidth="2.800" /></svg>
          <div className="ml-[50px] mr-[9px] h-[100px] w-[3px] bg-[#a9b8aa]" />
        </div>
      </div>
    </footer>
  );
}

export default function App() {
  return (
    <div className="flex h-[2160px] w-[3840px] flex-col overflow-hidden bg-white font-['Noto_Sans',sans-serif]">
      <div className="bg-[#d3e3fd]">
        <TabStrip />
        <AddressBar />
        <Bookmarks />
      </div>
      <div className="flex h-[1757px] overflow-hidden">
        <Sidebar />
        <Canvas />
        <Scrollbar />
      </div>
      <Taskbar />
    </div>
  );
}
